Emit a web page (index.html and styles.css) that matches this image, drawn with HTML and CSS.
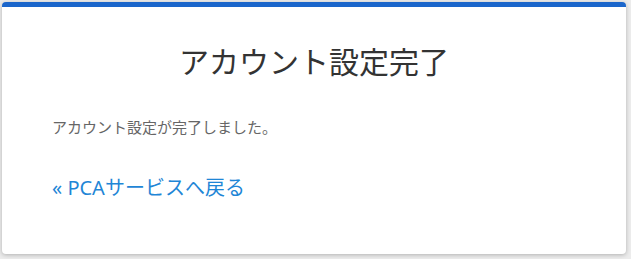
FILE: index.html
```html
<!DOCTYPE html>
<html lang="ja">
<head>
<meta charset="utf-8">
<title>アカウント設定完了</title>
<link rel="stylesheet" href="styles.css">
</head>
<body>
<main class="page">
  <section class="card">
    <h1 class="card-title">アカウント設定完了</h1>
    <p class="card-text">アカウント設定が完了しました。</p>
    <a class="back-link" href="#">« PCAサービスへ戻る</a>
  </section>
</main>
</body>
</html>
```
FILE: styles.css
```css
html, body {
  margin: 0;
  padding: 0;
}
body {
  background: #ececec;
  font-family: "Noto Sans", "Noto Sans CJK JP", sans-serif;
}
.page {
  padding: 2px 5px 5px 2px;
}
.card {
  background: #ffffff;
  border-top: 5px solid #1b66cb;
  border-radius: 4px;
  box-shadow: 0 1px 4px rgba(0, 0, 0, 0.25);
  height: 247px;
  box-sizing: content-box;
  padding: 0 50px;
  display: flex;
  flex-direction: column;
  align-items: flex-start;
}
.card-title {
  align-self: stretch;
  margin: 37px 0 0;
  font-size: 30px;
  line-height: 36px;
  font-weight: 400;
  text-align: center;
  color: #333333;
}
.card-text {
  margin: 35px 0 0;
  font-size: 15px;
  line-height: 24px;
  color: #666666;
}
.back-link {
  margin-top: 34px;
  font-size: 20px;
  line-height: 30px;
  color: #1f86d6;
  text-decoration: none;
}
```
